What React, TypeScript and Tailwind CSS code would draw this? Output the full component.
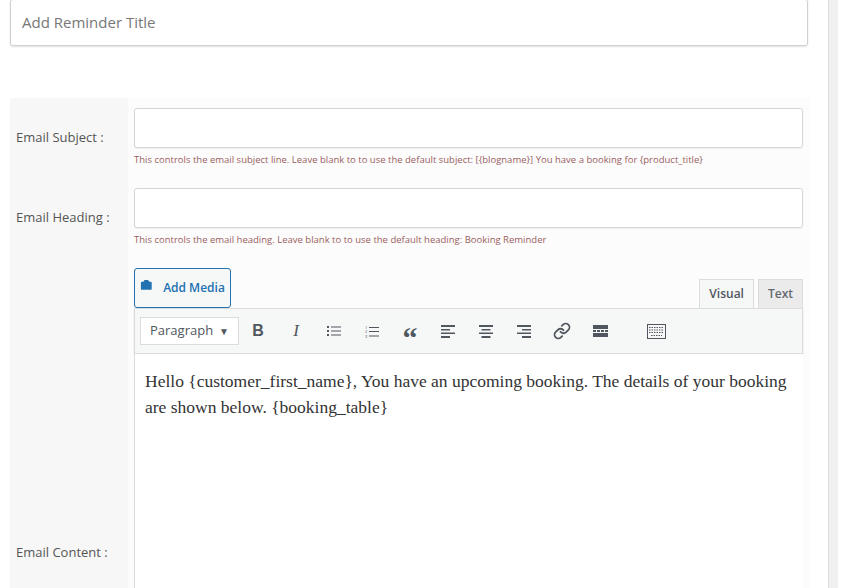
import React from 'react';

const Btn = ({ children }: { children: React.ReactNode }) => (
  <div className="w-[38px] h-[30px] flex items-center justify-center text-[#50575e]">{children}</div>
);

export default function App() {
  return (
    <div className="relative w-[841px] h-[588px] overflow-hidden bg-white" style={{ fontFamily: '"Open Sans", sans-serif' }}>
      {/* scrollbar strip */}
      <div className="absolute right-[3px] top-0 bottom-0 w-[10px] bg-[#f0f0f0] border-l border-[#dcdcdc]" />

      <div className="ml-[10px] w-[798px] h-[47px] -mt-[1px] border border-[#d0d0d0] rounded-[3px] shadow-[0_1px_2px_rgba(0,0,0,0.12)] flex items-center px-[11px] text-[15px] text-[#777]">
        Add Reminder Title
      </div>

      <div className="mt-[52px] ml-[10px] w-[800px] h-[500px] flex">
        <div className="w-[118px] bg-[#f7f7f7] text-[13px] text-[#555] pl-[6px] relative">
          <div className="absolute top-[30px] left-[6px]">Email Subject :</div>
          <div className="absolute top-[110px] left-[6px]">Email Heading :</div>
          <div className="absolute top-[445px] left-[6px]">Email Content :</div>
        </div>
        <div className="flex-1 bg-[#fcfcfc] pl-[6px] pr-[7px] pt-[10px]">
          <div className="h-[40px] border border-[#d6d6d6] rounded-[3px] bg-white shadow-[0_1px_1px_rgba(0,0,0,0.06)]" />
          <div className="text-[9.5px] mt-[5px] h-[35px]" style={{ color: '#9a5e5e' }}>This controls the email subject line. Leave blank to to use the default subject: [{'{blogname}'}] You have a booking for {'{product_title}'}</div>
          <div className="h-[40px] border border-[#d6d6d6] rounded-[3px] bg-white shadow-[0_1px_1px_rgba(0,0,0,0.06)]" />
          <div className="text-[9.5px] mt-[5px] h-[35px]" style={{ color: '#9a5e5e' }}>This controls the email heading. Leave blank to to use the default heading: Booking Reminder</div>

          <div className="flex items-end justify-between h-[40px]">
            <div className="h-[40px] w-[97px] border border-[#2271b1] rounded-[3px] bg-[#f6f7f7] flex items-center justify-center gap-[5px] text-[12px] font-semibold text-[#2271b1]">
              <svg width="18" height="18" viewBox="0 0 20 20" fill="#2271b1"><path d="M13 11V4c0-.55-.45-1-1-1h-1.67L9 1H5L3.67 3H2c-.55 0-1 .45-1 1v7c0 .55.45 1 1 1h10c.55 0 1-.45 1-1zM7 4.5c1.380 2.5 1.12 2.5 2.5S8.38 9.5 7 9.5 4.5 8.38 4.5 7 5.62 4.5 7 4.5zM14 6h5v10.5c0 1.38-1.12 2.5-2.5 2.5S14 17.880 14 16.5s1.12-2.5 2.5-2.5c.17 0 .34.02.5.05V9h-3V6zm-4 8.05V13h2v3.5c0 1.38-1.12 2.5-2.5 2.5S7 17.88 7 16.5 8.12 14 9.5 14c.17 0 .34.02.5.05z" /></svg>
              Add Media
            </div>
            <div className="flex gap-[4px] mb-0">
              <div className="h-[29px] px-[9px] border border-b-0 border-[#dcdcde] bg-[#f6f7f7] text-[12px] text-[#50575e] font-semibold flex items-center">Visual</div>
              <div className="h-[29px] px-[9px] border border-b-0 border-[#dcdcde] bg-[#ebebeb] text-[12px] text-[#646970] font-semibold flex items-center">Text</div>
            </div>
          </div>

          <div className="border border-[#dcdcde] bg-[#f6f7f7] h-[46px] flex items-center pl-[5px] shadow-[0_1px_2px_rgba(0,0,0,0.1)]">
            <div className="h-[28px] w-[99px] bg-white border border-[#dcdcde] flex items-center justify-between px-[9px] text-[13px] text-[#50575e]">
              Paragraph <span className="text-[10px]">▼</span>
            </div>
            <Btn><span className="font-bold text-[16px]" style={{ fontFamily: '"Liberation Sans", sans-serif' }}>B</span></Btn>
            <Btn><span className="italic text-[17px]" style={{ fontFamily: '"Liberation Serif", serif' }}>I</span></Btn>
            <Btn>
              <svg width="14" height="12" viewBox="0 0 14 12" fill="#50575e"><rect x="0" y="1" width="2" height="2"/><rect x="0" y="5" width="2" height="2"/><rect x="0" y="9" width="2" height="2"/><rect x="4" y="1.5" width="10" height="1"/><rect x="4" y="5.5" width="10" height="1"/><rect x="4" y="9.5" width="10" height="1"/></svg>
            </Btn>
            <Btn>
              <svg width="14" height="13" viewBox="0 0 14 13" fill="#50575e"><text x="0" y="4" fontSize="4">1</text><text x="0" y="8" fontSize="4">2</text><text x="0" y="12.5" fontSize="4">3</text><rect x="4" y="2" width="10" height="1"/><rect x="4" y="6" width="10" height="1"/><rect x="4" y="10.5" width="10" height="1"/></svg>
            </Btn>
            <Btn><span className="font-bold text-[30px] leading-none mt-[14px]" style={{ fontFamily: '"Liberation Serif", serif' }}>“</span></Btn>
            <Btn><svg width="14" height="13" viewBox="0 0 14 13" fill="#50575e"><rect y="0" width="14" height="2"/><rect y="4" width="9" height="1.5"/><rect y="7.5" width="14" height="1.5"/><rect y="11" width="9" height="2"/></svg></Btn>
            <Btn><svg width="14" height="13" viewBox="0 0 14 13" fill="#50575e"><rect y="0" width="14" height="2"/><rect x="2.5" y="4" width="9" height="1.5"/><rect y="7.5" width="14" height="1.5"/><rect x="2.5" y="11" width="9" height="2"/></svg></Btn>
            <Btn><svg width="14" height="13" viewBox="0 0 14 13" fill="#50575e"><rect y="0" width="14" height="2"/><rect x="5" y="4" width="9" height="1.5"/><rect y="7.5" width="14" height="1.5"/><rect x="5" y="11" width="9" height="2"/></svg></Btn>
            <Btn><svg width="18" height="18" viewBox="0 0 24 24" fill="none" stroke="#50575e" strokeWidth="2.4" strokeLinecap="round"><path d="M10 13a5 5 0 0 0 7.54.54l3-3a5 5 0 0 0-7.07-7.07l-1.72 1.71"/><path d="M14 11a5 5 0 0 0-7.54-.54l-3 3a5 5 0 0 0 7.07 7.07l1.71-1.71"/></svg></Btn>
            <Btn><svg width="15" height="12" viewBox="0 0 15 12" fill="#50575e"><rect width="15" height="4"/><rect y="5" width="3" height="2"/><rect x="4" y="5" width="3" height="2"/><rect x="8" y="5" width="3" height="2"/><rect x="12" y="5" width="3" height="2"/><rect y="8" width="15" height="4"/></svg></Btn>
            <div className="w-[18px]" />
            <Btn><svg width="19" height="15" viewBox="0 0 19 15" fill="none" stroke="#50575e"><rect x="0.5" y="0.5" width="18" height="14"/><path d="M2 3.5h15M2 6h15M2 8.5h15M4 11.5h11" strokeDasharray="1.5 1" /></svg></Btn>
          </div>

          <div className="bg-white border-l border-[#dcdcde] h-[300px] px-[10px] pt-[14px] text-[17.5px] leading-[26px] text-[#333]" style={{ fontFamily: '"Liberation Serif", Georgia, serif' }}>
            Hello {'{customer_first_name}'}, You have an upcoming booking. The details of your booking are shown below. {'{booking_table}'}
          </div>
        </div>
      </div>
    </div>
  );
}
